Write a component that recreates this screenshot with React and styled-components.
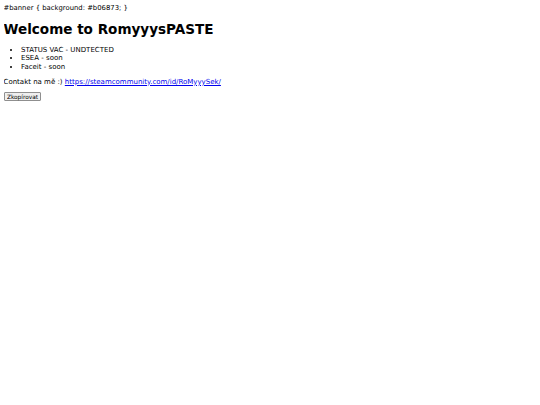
import React from "react";
import styled, { createGlobalStyle } from "styled-components";

const Global = createGlobalStyle`
  html, body { background: #fff; }
  body {
    margin: 3.5px;
    font-family: "DejaVu Sans", Verdana, sans-serif;
    font-size: 7px;
    color: #000;
  }
`;

const Banner = styled.div`
  font-size: 6.85px;
  line-height: 8.15px;
`;

const Title = styled.h1`
  font-size: 13.55px;
  line-height: 16.3px;
  font-weight: bold;
  margin: 9.2px 0;
`;

const List = styled.ul`
  margin: 7px 0;
  padding-left: 17.5px;
  list-style: disc;
`;

const Item = styled.li`
  line-height: 8.15px;
`;

const Para = styled.p`
  margin: 6.5px 0;
  line-height: 8.15px;
`;

const Link = styled.a`
  color: #0000ee;
  text-decoration: underline;
`;

const CopyButton = styled.button`
  font-family: "DejaVu Sans", Verdana, sans-serif;
  font-size: 5.83px;
  padding: 0.2px 2.4px;
  margin: 0;
  background: #efefef;
  color: #000;
  border: 1px solid #8f8f8f;
  border-radius: 1px;
  line-height: normal;
`;

export default function App() {
  return (
    <>
      <Global />
      <Banner>#banner &#123; background: #b06873; &#125;</Banner>
      <Title>Welcome to RomyyysPASTE</Title>
      <List>
        <Item>STATUS VAC - UNDTECTED</Item>
        <Item>ESEA - soon</Item>
        <Item>Faceit - soon</Item>
      </List>
      <Para>
        Contakt na mě :){" "}
        <Link href="https://steamcommunity.com/id/RoMyyySek/">
          https://steamcommunity.com/id/RoMyyySek/
        </Link>
      </Para>
      <CopyButton>Zkopírovat</CopyButton>
    </>
  );
}
